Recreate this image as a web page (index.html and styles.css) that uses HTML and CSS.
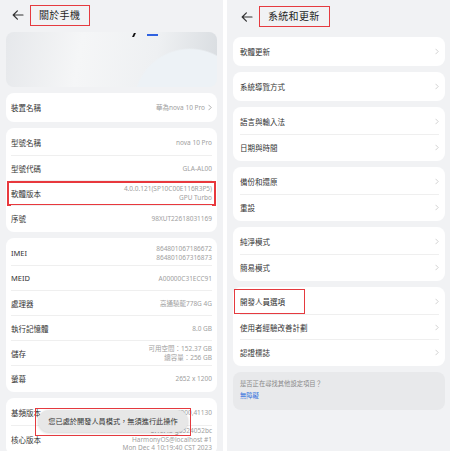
FILE: index.html
```html
<!DOCTYPE html>
<html lang="zh-Hant">
<head>
    <meta charset="UTF-8">
    <meta name="viewport" content="width=device-width, initial-scale=1.0">
    <title>關於手機 / 系統和更新</title>
    <link rel="stylesheet" href="styles.css">
</head>
<body>
    <div class="screens">
        <!-- 左：關於手機 -->
        <section class="phone">
            <header class="topbar">
                <svg class="back" viewBox="0 0 12 10" width="12" height="10"><path d="M11 5H1.2M5.4 0.8L1.2 5l4.2 4.2"/></svg>
                <h1 class="title marked">關於手機</h1>
            </header>

            <div class="hero">
                <span class="hero-slash"></span>
                <span class="hero-dash"></span>
            </div>

            <div class="card">
                <div class="row">
                    <span class="label">裝置名稱</span>
                    <span class="value">華為nova 10 Pro</span>
                    <svg class="chev chev-sm" viewBox="0 0 5 8" width="4" height="7"><path d="M1 1l3 3-3 3"/></svg>
                </div>
            </div>

            <div class="card">
                <div class="row"><span class="label">型號名稱</span><span class="value">nova 10 Pro</span></div>
                <div class="row"><span class="label">型號代碼</span><span class="value">GLA-AL00</span></div>
                <div class="row row-marked"><span class="label">軟體版本</span><span class="value">4.0.0.121(SP10C00E116R3P5)<br>GPU Turbo</span></div>
                <div class="row"><span class="label">序號</span><span class="value">98XUT22618031169</span></div>
            </div>

            <div class="card">
                <div class="row"><span class="label">IMEI</span><span class="value">864801067186672<br>864801067316873</span></div>
                <div class="row"><span class="label">MEID</span><span class="value">A00000C31ECC91</span></div>
                <div class="row"><span class="label">處理器</span><span class="value">高通驍龍778G 4G</span></div>
                <div class="row"><span class="label">執行記憶體</span><span class="value">8.0 GB</span></div>
                <div class="row"><span class="label">儲存</span><span class="value">可用空間：152.37 GB<br>總容量：256 GB</span></div>
                <div class="row"><span class="label">螢幕</span><span class="value">2652 x 1200</span></div>
            </div>

            <div class="card">
                <div class="row"><span class="label">基頻版本</span><span class="value">21C20B366S000C000,41130</span></div>
                <div class="row row-tall"><span class="label">核心版本</span><span class="value">5.10.43-g6524052bc<br>HarmonyOS@localhost #1<br>Mon Dec 4 10:19:40 CST 2023</span></div>
            </div>

            <!-- 提示浮層 -->
            <div class="toast-box">
                <div class="toast">您已處於開發人員模式，無須進行此操作</div>
            </div>
        </section>

        <!-- 右：系統和更新 -->
        <section class="phone">
            <header class="topbar topbar-tall">
                <svg class="back" viewBox="0 0 12 10" width="12" height="10"><path d="M11 5H1.2M5.4 0.8L1.2 5l4.2 4.2"/></svg>
                <h1 class="title marked">系統和更新</h1>
            </header>

            <div class="card card-menu">
                <div class="row"><span class="label">軟體更新</span><svg class="chev" viewBox="0 0 5 8" width="4" height="7"><path d="M1 1l3 3-3 3"/></svg></div>
            </div>
            <div class="card card-menu">
                <div class="row"><span class="label">系統導覽方式</span><svg class="chev" viewBox="0 0 5 8" width="4" height="7"><path d="M1 1l3 3-3 3"/></svg></div>
            </div>
            <div class="card card-menu">
                <div class="row"><span class="label">語言與輸入法</span><svg class="chev" viewBox="0 0 5 8" width="4" height="7"><path d="M1 1l3 3-3 3"/></svg></div>
                <div class="row"><span class="label">日期與時間</span><svg class="chev" viewBox="0 0 5 8" width="4" height="7"><path d="M1 1l3 3-3 3"/></svg></div>
            </div>
            <div class="card card-menu">
                <div class="row"><span class="label">備份和還原</span><svg class="chev" viewBox="0 0 5 8" width="4" height="7"><path d="M1 1l3 3-3 3"/></svg></div>
                <div class="row"><span class="label">重設</span><svg class="chev" viewBox="0 0 5 8" width="4" height="7"><path d="M1 1l3 3-3 3"/></svg></div>
            </div>
            <div class="card card-menu">
                <div class="row"><span class="label">純淨模式</span><svg class="chev" viewBox="0 0 5 8" width="4" height="7"><path d="M1 1l3 3-3 3"/></svg></div>
                <div class="row"><span class="label">簡易模式</span><svg class="chev" viewBox="0 0 5 8" width="4" height="7"><path d="M1 1l3 3-3 3"/></svg></div>
            </div>
            <div class="card card-menu">
                <div class="row"><span class="label label-marked">開發人員選項</span><svg class="chev" viewBox="0 0 5 8" width="4" height="7"><path d="M1 1l3 3-3 3"/></svg></div>
                <div class="row"><span class="label">使用者經驗改善計劃</span><svg class="chev" viewBox="0 0 5 8" width="4" height="7"><path d="M1 1l3 3-3 3"/></svg></div>
                <div class="row"><span class="label">認證標誌</span><svg class="chev" viewBox="0 0 5 8" width="4" height="7"><path d="M1 1l3 3-3 3"/></svg></div>
            </div>

            <div class="suggest">
                <p>是否正在尋找其他設定項目？</p>
                <a href="#">無障礙</a>
            </div>
        </section>
    </div>
</body>
</html>
```

FILE: styles.css
```css
/* Reset */
* {
    margin: 0;
    padding: 0;
    box-sizing: border-box;
}

body {
    width: 450px;
    height: 451px;
    overflow: hidden;
    background: #ffffff;
    font-family: "Noto Sans", "Noto Sans CJK TC", sans-serif;
    color: #333333;
}

/* Two screenshots side by side */
.screens {
    display: flex;
    gap: 4px;
    height: 451px;
}

.phone {
    position: relative;
    width: 223px;
    height: 451px;
    overflow: hidden;
    background: #f1f2f4;
    display: flex;
    flex-direction: column;
    gap: 6px;
    padding: 0 6px;
}

.phone + .phone {
    padding: 0 5px 0 6px;
}

/* Top bar */
.topbar {
    height: 26px;
    flex-shrink: 0;
    display: flex;
    align-items: center;
    padding-left: 6px;
    padding-top: 4px;
}

.topbar-tall {
    height: 31px;
    padding-left: 8px;
    padding-top: 2px;
}

.back {
    fill: none;
    stroke: #333333;
    stroke-width: 1.2;
    stroke-linecap: round;
    stroke-linejoin: round;
}

.title {
    font-size: 10px;
    font-weight: 400;
    color: #1f1f1f;
    margin-left: 6px;
    padding: 3px 9px 3px 8px;
    line-height: 13px;
    letter-spacing: 0.3px;
}

/* Red annotation boxes */
.marked {
    border: 1.5px solid #e53a3f;
}

/* Banner */
.hero {
    position: relative;
    height: 55px;
    flex-shrink: 0;
    border-radius: 8px;
    background:
        radial-gradient(circle 57px at 184px 73px, #edf2f6 97%, rgba(237, 242, 246, 0) 100%),
        linear-gradient(100deg, #e6e8eb 0%, #f5f6f7 35%, #eef0f2 70%, #d8dce0 100%);
}

.hero-slash {
    position: absolute;
    left: 127px;
    top: 1px;
    width: 2px;
    height: 4px;
    background: #111111;
    transform: skewX(-25deg);
}

.hero-dash {
    position: absolute;
    left: 141px;
    top: 2px;
    width: 11px;
    height: 2px;
    background: #2f62e0;
}

/* Cards */
.card {
    flex-shrink: 0;
    background: #ffffff;
    border-radius: 8px;
    padding: 2px 5px;
}

.card-menu {
    padding: 2px 6px 2px 7px;
}

.row {
    position: relative;
    display: flex;
    align-items: center;
    justify-content: space-between;
    gap: 6px;
    min-height: 25px;
}

.row + .row {
    border-top: 1px solid #efefef;
}

.row-tall {
    min-height: 27px;
    padding-top: 1px;
}

.row-tall .value {
    line-height: 8.5px;
}

.row-marked::after {
    content: "";
    position: absolute;
    top: 0;
    bottom: -1px;
    left: -4px;
    right: -4px;
    border: 2px solid #e8383d;
}

.label {
    position: relative;
    font-size: 7.5px;
    color: #333333;
    white-space: nowrap;
}

.label-marked::after {
    content: "";
    position: absolute;
    top: -7px;
    bottom: -7px;
    left: -6px;
    right: -20px;
    border: 1.5px solid #e53a3f;
}

.value {
    margin-left: auto;
    font-size: 6.5px;
    line-height: 9px;
    color: #a0a0a0;
    text-align: right;
    white-space: nowrap;
}

.chev {
    flex-shrink: 0;
    fill: none;
    stroke: #c6c6c6;
    stroke-width: 1;
    stroke-linecap: round;
    stroke-linejoin: round;
}

.chev-sm {
    margin-left: -3px;
    stroke: #9a9a9a;
}

/* Suggestion box */
.suggest {
    flex-shrink: 0;
    height: 38px;
    background: #e8e9eb;
    border-radius: 8px;
    padding: 7px 7px;
}

.suggest p {
    font-size: 6.3px;
    color: #8a8a8a;
    line-height: 10px;
}

.suggest a {
    display: block;
    margin-top: 2px;
    font-size: 6.3px;
    line-height: 10px;
    color: #2f6fdc;
    text-decoration: none;
}

/* Toast overlay */
.toast-box {
    position: absolute;
    left: 35px;
    top: 408px;
    width: 156px;
    height: 28px;
    border: 1.5px solid #e53a3f;
    padding: 1px 2px;
}

.toast {
    height: 22px;
    border-radius: 11px;
    background: #e7e7e7;
    box-shadow: 0 1px 3px rgba(0, 0, 0, 0.18);
    font-size: 7.2px;
    color: #333333;
    display: flex;
    align-items: center;
    justify-content: center;
    white-space: nowrap;
}
```
